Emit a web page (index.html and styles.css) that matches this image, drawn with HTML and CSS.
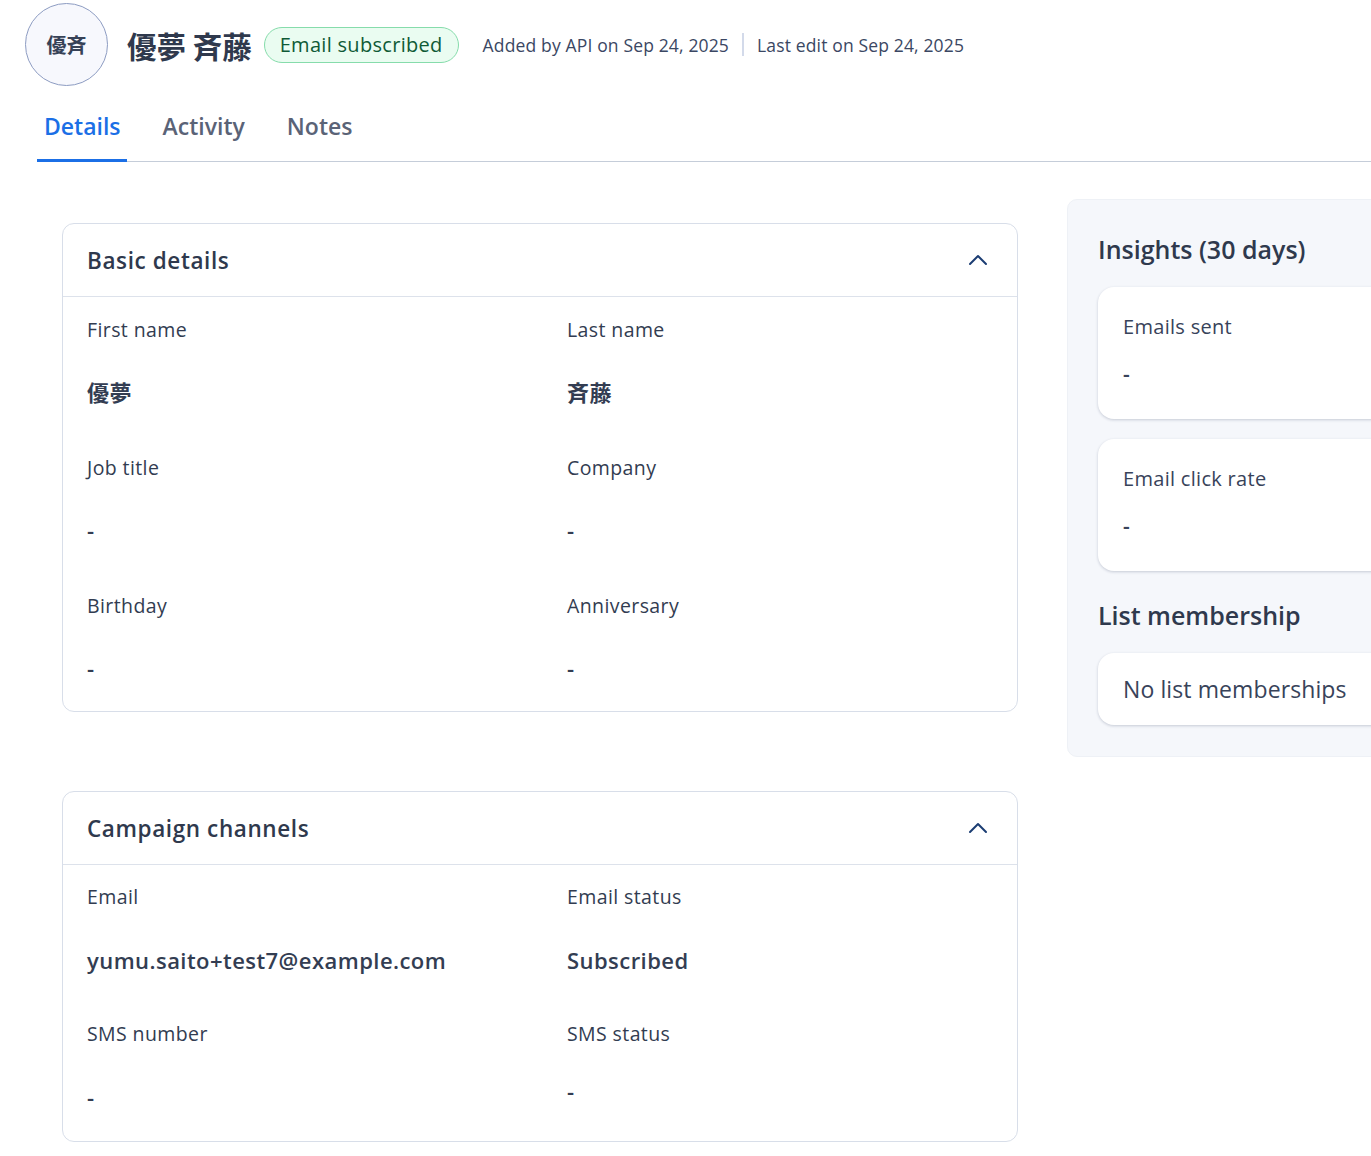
FILE: index.html
```html
<!DOCTYPE html>
<html lang="ja">
<head>
<meta charset="utf-8">
<title>Contact</title>
<link rel="stylesheet" href="styles.css">
</head>
<body>
<div class="page">
  <header class="header">
    <div class="avatar">優斉</div>
    <h1 class="name">優夢 斉藤</h1>
    <span class="badge">Email subscribed</span>
    <div class="meta">
      <span>Added by API on Sep 24, 2025</span>
      <span class="sep"></span>
      <span>Last edit on Sep 24, 2025</span>
    </div>
  </header>

  <nav class="tabs">
    <a class="tab active">Details</a>
    <a class="tab">Activity</a>
    <a class="tab">Notes</a>
  </nav>

  <div class="content">
    <main class="main">
      <section class="card">
        <div class="card-head">
          <h2 class="card-title">Basic details</h2>
          <svg class="chev" width="20" height="12" viewBox="0 0 20 12"><polyline points="2,10 10,2 18,10" fill="none" stroke="#1b3d73" stroke-width="2" stroke-linecap="round" stroke-linejoin="round"/></svg>
        </div>
        <div class="fields">
          <div class="field"><div class="label">First name</div><div class="value">優夢</div></div>
          <div class="field"><div class="label">Last name</div><div class="value">斉藤</div></div>
          <div class="field"><div class="label">Job title</div><div class="value">-</div></div>
          <div class="field"><div class="label">Company</div><div class="value">-</div></div>
          <div class="field"><div class="label">Birthday</div><div class="value">-</div></div>
          <div class="field"><div class="label">Anniversary</div><div class="value">-</div></div>
        </div>
      </section>

      <section class="card">
        <div class="card-head">
          <h2 class="card-title">Campaign channels</h2>
          <svg class="chev" width="20" height="12" viewBox="0 0 20 12"><polyline points="2,10 10,2 18,10" fill="none" stroke="#1b3d73" stroke-width="2" stroke-linecap="round" stroke-linejoin="round"/></svg>
        </div>
        <div class="fields fields-tight">
          <div class="field"><div class="label">Email</div><div class="value">yumu.saito+test7@example.com</div></div>
          <div class="field"><div class="label">Email status</div><div class="value">Subscribed</div></div>
          <div class="field"><div class="label">SMS number</div><div class="value">-</div></div>
          <div class="field"><div class="label">SMS status</div><div class="value value-up">-</div></div>
        </div>
      </section>
    </main>

    <aside class="side">
      <h3 class="side-title">Insights (30 days)</h3>
      <div class="stat">
        <div class="stat-label">Emails sent</div>
        <div class="stat-value">-</div>
      </div>
      <div class="stat">
        <div class="stat-label">Email click rate</div>
        <div class="stat-value">-</div>
      </div>
      <h3 class="side-title side-title-2">List membership</h3>
      <div class="empty">No list memberships</div>
    </aside>
  </div>
</div>
</body>
</html>
```

FILE: styles.css
```css
html, body {
  margin: 0;
  padding: 0;
  overflow-x: hidden;
  background: #ffffff;
}

body {
  font-family: "Open Sans", "Noto Sans CJK JP", sans-serif;
  color: #2f394d;
}

.page {
  width: 1500px;
}

/* Header */
.header {
  display: flex;
  align-items: center;
  padding: 3px 0 0 25px;
  height: 83px;
}

.avatar {
  width: 81px;
  height: 81px;
  border: 1px solid #8d9cc2;
  border-radius: 50%;
  background: #f7f8fd;
  display: flex;
  align-items: center;
  justify-content: center;
  font-family: "Noto Sans CJK JP", sans-serif;
  font-weight: 700;
  font-size: 20px;
  color: #374257;
}

.name {
  margin: 0 0 0 19px;
  font-family: "Noto Sans CJK JP", sans-serif;
  font-size: 29.5px;
  font-weight: 700;
  color: #2f394d;
  line-height: 40px;
}

.badge {
  margin-left: 12px;
  height: 34px;
  padding: 0 15px;
  border: 1px solid #86dcab;
  border-radius: 18px;
  background: #eafcf1;
  color: #0f5a36;
  font-size: 20px;
  letter-spacing: 0.3px;
  display: flex;
  align-items: center;
}

.meta {
  margin-left: 24px;
  display: flex;
  align-items: center;
  font-size: 17.5px;
  letter-spacing: 0.15px;
  color: #3b4763;
}

.sep {
  width: 2px;
  height: 23px;
  background: #d3daea;
  margin: 0 13px;
}

/* Tabs */
.tabs {
  display: flex;
  gap: 29px;
  margin-left: 37px;
  border-bottom: 1px solid #c5cdd9;
}

.tab {
  display: block;
  padding: 24px 6px 17px 7px;
  line-height: 32px;
  font-size: 23px;
  font-weight: 600;
  color: #5a6377;
  border-bottom: 3px solid transparent;
  margin-bottom: -1px;
}

.tab.active {
  color: #1b6fe6;
  border-bottom-color: #1b6fe6;
}

/* Content */
.content {
  display: flex;
  align-items: flex-start;
  gap: 49px;
  padding: 37px 0 0 62px;
}

.main {
  width: 956px;
  padding-top: 24px;
  display: flex;
  flex-direction: column;
  gap: 79px;
}

.card {
  border: 1px solid #d8dee9;
  border-radius: 12px;
  background: #fff;
}

.card-head {
  height: 72px;
  display: flex;
  align-items: center;
  justify-content: space-between;
  padding: 0 29px 0 24px;
  border-bottom: 1px solid #dde2eb;
}

.card-title {
  margin: 0;
  font-size: 22.5px;
  letter-spacing: 0.6px;
  font-weight: 600;
  color: #2f394d;
}

.chev {
  display: block;
}

.fields {
  display: grid;
  grid-template-columns: 480px 1fr;
  row-gap: 50px;
  padding: 21px 0 29px 24px;
}

.fields-tight {
  row-gap: 48px;
  padding-top: 20px;
  padding-bottom: 30px;
}

.label {
  font-size: 19.5px;
  letter-spacing: 0.4px;
  line-height: 24px;
  color: #323c51;
}

.value {
  margin-top: 36px;
  font-size: 22px;
  letter-spacing: 0.45px;
  line-height: 28px;
  font-weight: 600;
  color: #333d52;
}

.fields-tight .value {
  margin-top: 37px;
}

.fields-tight .value-up {
  margin-top: 31px;
}

/* Side panel */
.side {
  width: 380px;
  background: #f5f7fb;
  border: 1px solid #eef1f6;
  border-radius: 10px;
  padding: 33px 31px 31px 30px;
  box-sizing: border-box;
}

.side-title {
  margin: 0 0 22px;
  font-size: 25px;
  line-height: 32px;
  font-weight: 600;
  color: #2f394d;
}

.side-title-2 {
  margin-top: 28px;
}

.stat {
  background: #fff;
  border-radius: 16px;
  box-shadow: 0 1px 3px rgba(30, 45, 80, 0.22);
  height: 132px;
  box-sizing: border-box;
  padding: 28px 25px 0;
}

.stat + .stat {
  margin-top: 20px;
}

.stat-label {
  font-size: 20px;
  letter-spacing: 0.3px;
  line-height: 24px;
  color: #38435a;
}

.stat-value {
  margin-top: 23px;
  font-size: 21px;
  font-weight: 600;
  line-height: 24px;
  color: #38435a;
}

.empty {
  background: #fff;
  border-radius: 16px;
  box-shadow: 0 1px 3px rgba(30, 45, 80, 0.22);
  height: 72px;
  box-sizing: border-box;
  padding: 0 25px;
  display: flex;
  align-items: center;
  font-size: 23px;
  letter-spacing: 0.1px;
  color: #38435a;
}
```
